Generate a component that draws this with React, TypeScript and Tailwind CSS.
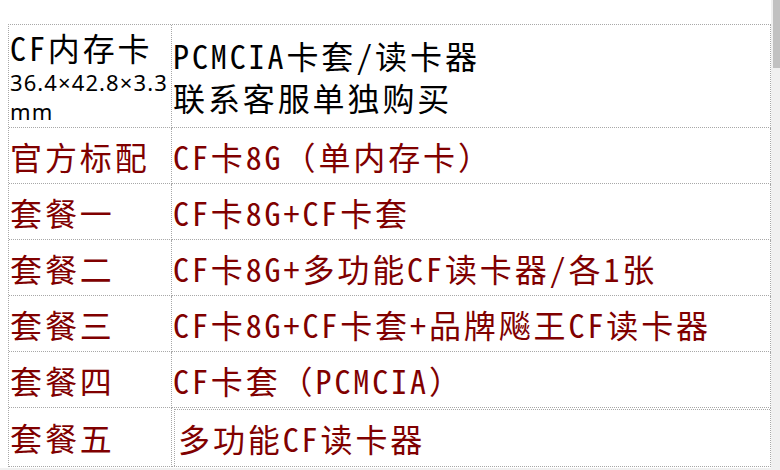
const cjk = "font-['Noto_Sans_CJK_SC',sans-serif] [font-feature-settings:'hwid'] text-[32px] tracking-[2.9px] leading-[42px] whitespace-nowrap";

// hwid also halves the full-width brackets, so keep those out of it
function Txt({ s }: { s: string }) {
  const parts = s.split(/([（）])/);
  return (
    <span className={cjk}>
      {parts.map((p, i) =>
        p === "（" || p === "）" ? (
          <span key={i} className="[font-feature-settings:normal]">{p}</span>
        ) : (
          p
        )
      )}
    </span>
  );
}

const rows = [
  { name: "官方标配", desc: "CF卡8G（单内存卡）" },
  { name: "套餐一", desc: "CF卡8G+CF卡套" },
  { name: "套餐二", desc: "CF卡8G+多功能CF读卡器/各1张" },
  { name: "套餐三", desc: "CF卡8G+CF卡套+品牌飚王CF读卡器" },
  { name: "套餐四", desc: "CF卡套（PCMCIA）" },
];

const cell = "border-r border-b border-dotted border-[#a8a8a8] flex items-center pl-px overflow-hidden";
const small = "font-['Noto_Sans',sans-serif] text-[22px] tracking-[1.1px] leading-[29px] whitespace-nowrap";

export default function App() {
  return (
    <div className="w-[780px] h-[470px] flex bg-white overflow-hidden">
      <div className="flex-1 flex flex-col">
        <div className="flex-1 pt-[24px] pl-[8px] overflow-hidden">
          <div className="w-[763px] grid grid-cols-[163px_599px] border-t border-l border-dotted border-[#a8a8a8]">
            {/* header row */}
            <div className={`${cell} h-[103px] text-black`}>
              <div>
                <div><Txt s="CF内存卡" /></div>
                <div className={small}>36.4×42.8×3.3</div>
                <div className={small}>mm</div>
              </div>
            </div>
            <div className={`${cell} h-[103px] text-black`}>
              <div>
                <div><Txt s="PCMCIA卡套/读卡器" /></div>
                <div><Txt s="联系客服单独购买" /></div>
              </div>
            </div>

            {rows.map((r) => (
              <div key={r.name} className="contents">
                <div className={`${cell} h-[56px] text-[#800000]`}>
                  <Txt s={r.name} />
                </div>
                <div className={`${cell} h-[56px] text-[#800000]`}>
                  <Txt s={r.desc} />
                </div>
              </div>
            ))}

            {/* last row, second cell carries a nested box */}
            <div className={`${cell} h-[59px] text-[#800000]`}>
              <Txt s="套餐五" />
            </div>
            <div className="border-r border-b border-dotted border-[#a8a8a8] h-[59px] pl-[2px] pt-[1px] flex">
              <div className="flex-1 border-t border-l border-dotted border-[#a8a8a8] flex items-center pl-[3px] text-[#800000]">
                <Txt s="多功能CF读卡器" />
              </div>
            </div>
          </div>
        </div>
        <div className="h-[2px] bg-[#f0f0f0]" />
      </div>
      {/* scrollbar */}
      <div className="w-[9px] bg-[#f0f0f0] pl-[2px]">
        <div className="w-[7px] h-[68px] bg-[#c1c1c1]" />
      </div>
    </div>
  );
}
